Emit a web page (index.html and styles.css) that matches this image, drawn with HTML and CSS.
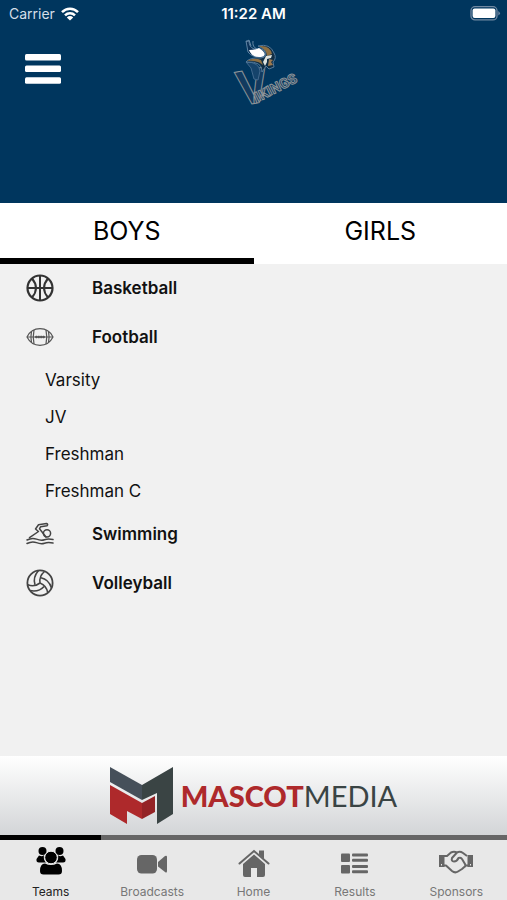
FILE: index.html
```html
<!doctype html>
<html lang="en"><head>
	<title>Vikings - Teams</title>
	<meta charset="utf-8">
	<meta name="viewport" content="width=device-width, initial-scale=1">
	<link rel="stylesheet" href="styles.css">
</head><body>
	<header class="header">
		<div class="status">
			<span class="carrier">Carrier
				<svg width="18" height="14" viewBox="0 0 18 14" fill="none" stroke="#fff" stroke-width="2.5">
					<path d="M1 5.2C5.500 .6 12.500 .6 17 5.200M4 8.400C6.800 5.600 11.200 5.600 14 8.400"/>
					<path d="M9 13.600L5.800 10.400Q9 7.600 12.200 10.400Z" fill="#fff" stroke="none"/>
				</svg>
			</span>
			<span class="time">11:22 AM</span>
			<svg class="battery" width="31" height="15" viewBox="0 0 31 15">
				<rect x="1" y=".7" width="26" height="13.200" rx="4" fill="none" stroke="#7189a2" stroke-width="1.300"/>
				<rect x="2.600" y="2.500" width="22.800" height="9.600" rx="2" fill="#fff"/>
				<path d="M28.300 5Q31.600 7.300 28.300 9.600Z" fill="#7189a2"/>
			</svg>
		</div>
		<div class="topbar">
			<button type="button" class="menu" aria-label="Menu">
				<svg width="36" height="30" viewBox="0 0 36 30" fill="#fff">
					<rect width="36" height="6.500" rx="1.500"/>
					<rect y="11.500" width="36" height="6.500" rx="1.500"/>
					<rect y="23.200" width="36" height="6.500" rx="1.500"/>
				</svg>
			</button>
			<svg class="team-logo" width="72" height="80" viewBox="0 -7 72 80" role="img" aria-label="Vikings">
				<text class="mark-v" x="10" y="70" transform="rotate(-10 10 70)" font-size="48">V</text>
				<text class="mark-rest" x="28" y="66" transform="rotate(-27 28 66)" font-size="14">IKINGS</text>
				<g transform="translate(2 2)">
					<!-- horns -->
					<path d="M14 3L16 14Q20 20 31 19Q36 13 29 11L22 11Q17 9 17 3Z" fill="#0b3157" stroke="#5e83a3"/>
					<path d="M21 3Q20 9 25 11M14 4L17 2L19 8" fill="none" stroke="#6688a5"/>
					<path d="M17 12Q24 12 27 10L31 13Q35 18 29 19Q20 20 17 12Z" fill="#fff"/>
					<!-- helmet and face -->
					<path d="M14 24Q27 24 28 33L26 42L22 41L19 30Z" fill="#15436b" stroke="#41698e"/>
					<path d="M26 8Q38 5 42 15Q45 20 41 24L42 29L37 31L34 28L30 34Q31 23 14 24Q18 19 29 20Q37 19 32 11Z" fill="#102e45" stroke="#54799a"/>
					<path d="M27 8Q38 7 40 16L35 18Q35 12 27 8ZM15 23Q22 19 29 22L31 27Q25 22 15 23Z" fill="#8f7042"/>
					<path d="M34 18L40 17L39 20L35 21L35 24L33 28L31 24Z" fill="#dfe3df"/>
					<path d="M37 21L41 22L39 24L41 27L36 28Z" fill="#9b7950"/>
				</g>
			</svg>
		</div>
	</header>

	<div class="tabs" role="tablist">
		<button type="button" class="tab active" role="tab" aria-selected="true">BOYS</button>
		<button type="button" class="tab" role="tab" aria-selected="false">GIRLS</button>
	</div>

	<main class="sports">
		<a class="sport" href="#basketball">
			<svg width="28" height="28" viewBox="0 0 28 28" fill="none" stroke="#333" stroke-width="2">
				<circle cx="14" cy="14" r="12.500" stroke-width="2.200"/>
				<path d="M14 1.500V26.500M1.500 14H26.500M6 4.500Q14 14 6 23.500M22 4.500Q14 14 22 23.500"/>
			</svg>
			Basketball
		</a>
		<a class="sport" href="#football">
			<svg width="28" height="28" viewBox="0 0 28 28" fill="none" stroke="#555" stroke-width="1.200">
				<path d="M1 14C4 8 9 5.700 14 5.700S24 8 27 14C24 20 19 22.300 14 22.300S4 20 1 14Z"/>
				<path d="M1 14H27M5.500 8.500Q4.300 14 5.500 19.500M8 7Q6.500 14 8 21M20 7Q21.500 14 20 21M22.500 8.500Q23.700 14 22.500 19.500"/>
				<path d="M9 14H19M10.500 12.800V15.200M12.800 12.800V15.200M15.200 12.800V15.200M17.500 12.800V15.200" stroke-width="1.400"/>
			</svg>
			Football
		</a>
		<div class="levels">
			<a href="#varsity">Varsity</a>
			<a href="#jv">JV</a>
			<a href="#freshman">Freshman</a>
			<a href="#freshman-c">Freshman C</a>
		</div>
		<a class="sport" href="#swimming">
			<svg width="28" height="28" viewBox="0 0 28 28" fill="none" stroke="#444" stroke-width="1.500" stroke-linejoin="round" stroke-linecap="round">
				<circle cx="21" cy="13.300" r="3.600"/>
				<path d="M3.500 17.700L12.500 11.500L9.500 9L12.500 4.700L20.500 3.500Q22.500 4 21 5.700L14.700 6.700L13.500 8.700L20 17"/>
				<path d="M1 20Q6 17.300 10.500 19.100T18.500 19.700T27 19.500M1 23.500Q6 20.800 10.500 22.600T18.500 23.200T27 23"/>
			</svg>
			Swimming
		</a>
		<a class="sport" href="#volleyball">
			<svg width="28" height="28" viewBox="0 0 28 28" fill="none" stroke="#444" stroke-width="1.600">
				<circle cx="14" cy="14" r="12.600" stroke-width="1.800"/>
				<g id="panel">
					<path d="M14 14Q13 7 18.500 2.500M9 15.800Q6.500 8.500 12.500 1.500"/>
				</g>
				<use href="#panel" transform="rotate(120 14 14)"/>
				<use href="#panel" transform="rotate(240 14 14)"/>
			</svg>
			Volleyball
		</a>
	</main>

	<a class="sponsor" href="#mascot-media">
		<svg width="64" height="58" viewBox="0 0 64 58">
			<path d="M0 0L32 18V33L0 15Z" fill="#46505a"/>
			<path d="M32 18L63 0V47L47 57V26L32 33Z" fill="#3a4444"/>
			<path d="M0 18L32 36V52L17 44V57L0 47Z" fill="#ae292b"/>
			<path d="M32 36L45 29V45L32 52Z" fill="#942326"/>
		</svg>
		<span class="wordmark"><b>MASCOT</b>MEDIA</span>
	</a>

	<nav class="nav">
		<a class="nav-item active" href="#teams">
			<svg width="32" height="32" viewBox="0 0 32 32">
				<circle cx="7.500" cy="6" r="4"/><circle cx="24.500" cy="6" r="4"/>
				<path d="M4 10.500Q8 12 9 10Q8 15 11 17.500H4Q1 17.500 1.500 14ZM28 10.500Q24 12 23 10Q24 15 21 17.500H28Q31 17.500 30.500 14Z"/>
				<circle cx="16" cy="12.500" r="6.300" stroke="#e8e8e8"/>
				<path d="M10 18.500Q16 21.500 22 18.500Q27 18.500 27 26Q27 29.500 23.500 29.500H8.500Q5 29.500 5 26Q5 18.500 10 18.500Z"/>
			</svg>
			Teams
		</a>
		<a class="nav-item" href="#broadcasts">
			<svg width="32" height="32" viewBox="0 0 32 32">
				<rect x="1" y="10" width="20" height="18.500" rx="4.500"/>
				<path d="M22 17L29 11Q31 10 31 12V26Q31 28.500 29 27L22 21.500Z"/>
			</svg>
			Broadcasts
		</a>
		<a class="nav-item" href="#home">
			<svg width="32" height="32" viewBox="0 0 32 32">
				<path d="M16 9.500L27 19V30Q27 32 25 32H19V23H13V32H7Q5 32 5 30V19Z"/>
				<path d="M1.500 18.500L16 6L30.500 18.500" fill="none" stroke="#666" stroke-width="2" stroke-linecap="round"/>
				<path d="M21 5.500H26V14L21 9.700Z"/>
			</svg>
			Home
		</a>
		<a class="nav-item" href="#results">
			<svg width="32" height="32" viewBox="0 0 32 32">
				<rect x="2" y="8.500" width="9" height="8.500" rx="1"/><rect x="2" y="20" width="9" height="8.500" rx="1"/>
				<rect x="13" y="8.500" width="16" height="3" rx="1"/><rect x="13" y="13.800" width="16" height="3" rx="1"/>
				<rect x="13" y="20" width="16" height="3" rx="1"/><rect x="13" y="25.300" width="16" height="3" rx="1"/>
			</svg>
			Results
		</a>
		<a class="nav-item" href="#sponsors">
			<svg width="36" height="32" viewBox="0 0 36 32">
				<path d="M1 10H6.500V22H1ZM29.500 10H35V22H29.500Z"/>
				<path d="M6 11H9L13 7.500Q16 6 19 7.500Q22 6 25 8L29 11M6 20.500H8L14 26Q17 28.500 20 26.500L24 24L28 20.500H30M19 7.500L14 13Q13 16.500 16 16.500Q19 16.500 20.500 13Q23 12 24 14L27 19Q28 21 26.500 22" fill="none" stroke="#666" stroke-width="2" stroke-linejoin="round"/>
				<path d="M3.500 19V20.500M32.500 19V20.500" stroke="#e8e8e8"/>
			</svg>
			Sponsors
		</a>
	</nav>
</body></html>
```
FILE: styles.css
```css
* {
	box-sizing: border-box;
}

body {
	display: flex;
	flex-direction: column;
	min-height: 100vh;
	margin: 0;
	background: #f1f1f1;
	color: #111;
	font: 17px/24px Inter, Roboto, sans-serif;
}

a {
	color: inherit;
	text-decoration: none;
}

button {
	padding: 0;
	border: 0;
	background: none;
	color: inherit;
	font: inherit;
	cursor: pointer;
}

svg {
	display: block;
	flex: none;
}

.header {
	background: #00365e;
	color: #fff;
	padding-bottom: 92px;
}

.status {
	display: grid;
	grid-template-columns: 1fr auto 1fr;
	align-items: center;
	height: 27px;
	padding: 0 6px;
}

.carrier {
	display: flex;
	align-items: center;
	gap: 6px;
	padding-left: 3px;
	font-size: 14px;
	color: #d5dfe8;
}

.time {
	font-size: 15px;
	font-weight: 600;
}

.battery {
	justify-self: end;
}

.topbar {
	display: grid;
	grid-template-columns: 1fr auto 1fr;
	align-items: center;
	height: 84px;
	padding-left: 25px;
}

.menu {
	justify-self: start;
}

.team-logo {
	overflow: visible;
}

.team-logo text {
	fill: #123a5f;
	stroke: #8e9599;
	font-family: Roboto, sans-serif;
	font-weight: bold;
}

.tabs {
	display: flex;
	background: #fff;
}

.tab {
	flex: 1;
	height: 61px;
	border-bottom: 6px solid transparent;
	color: #000;
	font-size: 25px;
}

.tab.active {
	border-bottom-color: #000;
}

.sports {
	flex: 1;
}

.sport {
	display: flex;
	align-items: center;
	gap: 38px;
	height: 49px;
	padding: 0 26px 1px;
	font-weight: 600;
}

.levels {
	padding: 0 45px;
}

.levels a {
	display: block;
	line-height: 37px;
}

.sponsor {
	display: flex;
	align-items: center;
	justify-content: center;
	gap: 7px;
	height: 79px;
	background: linear-gradient(#fff, #d3d5d7);
}

.wordmark {
	color: #3a4444;
	font: 29px/32px Lato, sans-serif;
}

.wordmark b {
	color: #ae292b;
	font-weight: 900;
}

.nav {
	display: flex;
	background: linear-gradient(#666 5px, #e8e8e8 5px);
}

.nav-item {
	display: flex;
	flex: 1;
	flex-direction: column;
	align-items: center;
	gap: 5px;
	height: 65px;
	padding-top: 10px;
	color: #777;
	font-size: 12px;
	line-height: 20px;
	fill: #666;
}

.nav-item.active {
	color: #222;
	fill: #000;
	background: linear-gradient(#000, #000) top / 100% 5px no-repeat;
}
```
